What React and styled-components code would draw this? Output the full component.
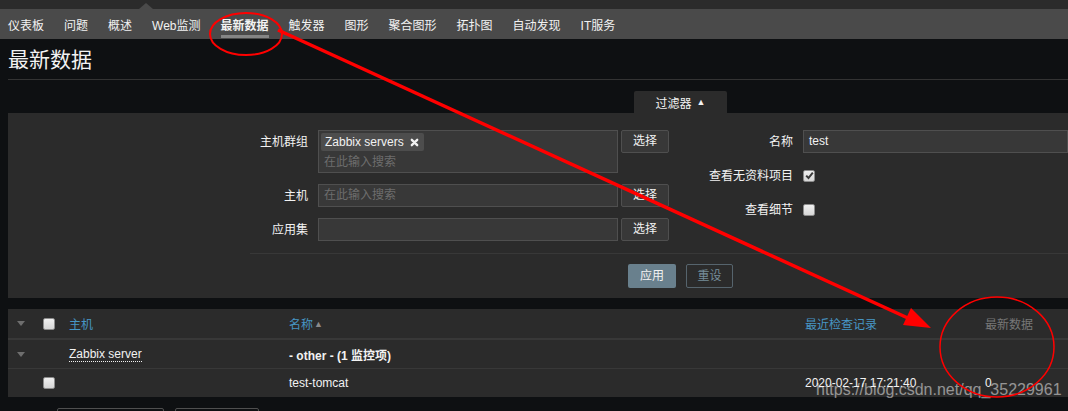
import React from 'react'
import styled, { createGlobalStyle } from 'styled-components'

const GlobalStyle = createGlobalStyle`
html, body {
  margin: 0;
  padding: 0;
  background: #0e1012;
  overflow: hidden;
}
body {
  font-family: "Liberation Sans", Arial, "Noto Sans CJK SC", sans-serif;
  font-size: 12px;
  color: #f2f2f2;
}
`;

const navItems = ['仪表板', '问题', '概述', 'Web监测', '最新数据', '触发器', '图形', '聚合图形', '拓扑图', '自动发现', 'IT服务'];

const App = () => {
  return (
    <Page>
      <GlobalStyle />
      <TopStrip />
      <SubNav>
        {navItems.map(item => (
          <NavItem key={item} active={item === '最新数据'}>{item}</NavItem>
        ))}
      </SubNav>

      <TitleBar>
        <Title>最新数据</Title>
      </TitleBar>

      <FilterTab>过滤器 <TabArrow>▲</TabArrow></FilterTab>
      <FilterBox>
        <FilterForms>
          <LeftGrid>
            <Label>主机群组</Label>
            <MultiSelect>
              <Chip>
                Zabbix servers
                <ChipClose viewBox="0 0 10 10">
                  <path d="M2 2 L8 8 M8 2 L2 8" />
                </ChipClose>
              </Chip>
              <Placeholder>在此输入搜索</Placeholder>
            </MultiSelect>
            <SelectButton>选择</SelectButton>

            <Label>主机</Label>
            <TextInput><Placeholder>在此输入搜索</Placeholder></TextInput>
            <SelectButton>选择</SelectButton>

            <Label>应用集</Label>
            <TextInput />
            <SelectButton>选择</SelectButton>
          </LeftGrid>

          <RightGrid>
            <Label>名称</Label>
            <TextInput>test</TextInput>

            <Label>查看无资料项目</Label>
            <CheckCell><Checkbox checked /></CheckCell>

            <Label>查看细节</Label>
            <CheckCell><Checkbox /></CheckCell>
          </RightGrid>
        </FilterForms>

        <FilterFooter>
          <ApplyButton>应用</ApplyButton>
          <ResetButton>重设</ResetButton>
        </FilterFooter>
      </FilterBox>

      <Table>
        <HeaderRow>
          <Cell><Collapse /></Cell>
          <Cell><Checkbox /></Cell>
          <HeadLink>主机</HeadLink>
          <HeadLink>名称<SortArrow>▲</SortArrow></HeadLink>
          <HeadLink>最近检查记录</HeadLink>
          <HeadText>最新数据</HeadText>
        </HeaderRow>
        <Row>
          <Cell><Collapse /></Cell>
          <Cell />
          <Cell><HostName>Zabbix server</HostName></Cell>
          <Cell><Bold>- other - (1 监控项)</Bold></Cell>
          <Cell />
          <Cell />
        </Row>
        <Row last>
          <Cell />
          <Cell><Checkbox /></Cell>
          <Cell />
          <Cell>test-tomcat</Cell>
          <Cell>2020-02-17 17:21:40</Cell>
          <Cell>0</Cell>
        </Row>
      </Table>

      <BottomBar>
        <OutlineBox width={107} />
        <OutlineBox width={84} />
      </BottomBar>

      <Watermark>https://blog.csdn.net/qq_35229961</Watermark>

      <Annotations viewBox="0 0 1068 411">
        <ellipse cx="246" cy="34" rx="36" ry="21" />
        <line x1="278" y1="30" x2="910" y2="319" strokeWidth="3.5" />
        <polygon points="931,328 903,325 911,308" />
        <ellipse cx="997" cy="347" rx="57" ry="50" strokeWidth="1.5" />
      </Annotations>
    </Page>
  )
};

export default App

const Page = styled.div`
position: relative;
width: 1068px;
height: 411px;
overflow: hidden;
`;

const TopStrip = styled.div`
height: 9px;
background: #2b2b2b;
`;

const SubNav = styled.nav`
position: relative;
display: flex;
gap: 20px;
height: 30px;
padding-left: 8px;
background: #4a4a4a;
&::before {
  content: '';
  position: absolute;
  left: 139px;
  top: -6px;
  border-left: 7px solid transparent;
  border-right: 7px solid transparent;
  border-bottom: 6px solid #4a4a4a;
}
`;

const NavItem = styled.div`
position: relative;
display: flex;
align-items: center;
color: #f2f2f2;
font-weight: ${p => p.active ? 'bold' : 'normal'};
&::after {
  content: '';
  display: ${p => p.active ? 'block' : 'none'};
  position: absolute;
  left: 0;
  right: 0;
  bottom: 1px;
  height: 3px;
  background: #858585;
}
`;

const TitleBar = styled.div`
display: flex;
align-items: center;
height: 41px;
margin: 0 0 0 8px;
padding-bottom: 2px;
box-sizing: border-box;
border-bottom: 1px solid #333;
`;

const Title = styled.h1`
margin: 0;
font-size: 21px;
font-weight: normal;
color: #f2f2f2;
`;

const FilterTab = styled.div`
display: flex;
align-items: center;
justify-content: center;
gap: 5px;
width: 93px;
height: 22px;
margin: 11px 0 0 634px;
background: #2b2b2b;
border-radius: 2px 2px 0 0;
color: #f2f2f2;
`;

const TabArrow = styled.span`
font-size: 9px;
`;

const FilterBox = styled.div`
margin-left: 8px;
padding-top: 17px;
background: #2b2b2b;
`;

const FilterForms = styled.div`
display: flex;
`;

const LeftGrid = styled.div`
display: grid;
grid-template-columns: 310px 303px 48px;
row-gap: 11px;
align-items: start;
`;

const RightGrid = styled.div`
flex: 1;
display: grid;
grid-template-columns: 134px 1fr;
grid-template-rows: 23px 23px 23px;
row-gap: 11px;
`;

const Label = styled.div`
height: 23px;
box-sizing: border-box;
padding: 1px 10px 0 0;
text-align: right;
line-height: 22px;
color: #f2f2f2;
`;

const MultiSelect = styled.div`
width: 300px;
height: 43px;
box-sizing: border-box;
padding: 2px 2px 0 2px;
background: #383838;
border: 1px solid #4f4f4f;
`;

const Chip = styled.div`
display: inline-flex;
align-items: center;
gap: 6px;
height: 18px;
padding: 0 5px 0 4px;
background: #4d4d4d;
border-radius: 2px;
color: #f2f2f2;
`;

const ChipClose = styled.svg`
width: 9px;
height: 9px;
stroke: #f2f2f2;
stroke-width: 2.6;
stroke-linecap: round;
`;

const Placeholder = styled.div`
padding-left: 3px;
margin-top: 2px;
color: #6d6d6d;
line-height: 18px;
`;

const TextInput = styled.div`
width: 300px;
height: 23px;
box-sizing: border-box;
padding-left: 5px;
background: #383838;
border: 1px solid #4f4f4f;
line-height: 21px;
color: #f2f2f2;
${RightGrid} & {
  width: auto;
}
& > ${Placeholder} {
  padding: 0;
  margin: 0;
  line-height: 21px;
}
`;

const SelectButton = styled.div`
height: 23px;
box-sizing: border-box;
border: 1px solid #4f4f4f;
border-radius: 2px;
background: #383838;
line-height: 21px;
text-align: center;
color: #f2f2f2;
`;

const CheckCell = styled.div`
display: flex;
align-items: center;
`;

const CheckboxBox = styled.div`
width: 12px;
height: 12px;
box-sizing: border-box;
border: 1px solid #8c8c8c;
border-radius: 2px;
background: linear-gradient(#f0f0f0, #d6d6d6);
display: flex;
align-items: center;
justify-content: center;
`;

const Checkbox = ({checked}) => (
  <CheckboxBox>
    {checked && (
      <svg width="9" height="9" viewBox="0 0 9 9">
        <path d="M1.2 4.6 L3.5 7 L7.8 1.6" fill="none" stroke="#3a3a3a" strokeWidth="2" />
      </svg>
    )}
  </CheckboxBox>
);

const FilterFooter = styled.div`
display: flex;
gap: 10px;
margin: 12px 0 0 242px;
padding: 10px 0 10px 378px;
border-top: 1px solid #383838;
`;

const ApplyButton = styled.div`
width: 48px;
height: 24px;
box-sizing: border-box;
border-radius: 2px;
background: #69808d;
color: #f2f2f2;
line-height: 24px;
text-align: center;
`;

const ResetButton = styled.div`
width: 47px;
height: 24px;
box-sizing: border-box;
border: 1px solid #56646d;
border-radius: 2px;
color: #768d99;
line-height: 22px;
text-align: center;
`;

const Table = styled.div`
margin: 11px 0 0 8px;
background: #2b2b2b;
`;

const HeaderRow = styled.div`
display: grid;
grid-template-columns: 35px 26px 220px 516px 180px 1fr;
align-items: center;
height: 29px;
border-bottom: 2px solid #383838;
`;

const Row = styled.div`
display: grid;
grid-template-columns: 35px 26px 220px 516px 180px 1fr;
align-items: center;
height: 28px;
border-bottom: ${p => p.last ? 'none' : '1px solid #383838'};
`;

const Cell = styled.div`
display: flex;
align-items: center;
color: #f2f2f2;
`;

const Collapse = styled.span`
margin-left: 9px;
border-left: 4px solid transparent;
border-right: 4px solid transparent;
border-top: 5px solid #6e6e6e;
`;

const HeadLink = styled.div`
display: flex;
align-items: center;
color: #4796c4;
`;

const HeadText = styled.div`
color: #777;
`;

const SortArrow = styled.span`
margin-left: 1px;
font-size: 9px;
color: #8a8a8a;
`;

const HostName = styled.span`
line-height: 14px;
border-bottom: 1px dotted #f2f2f2;
`;

const Bold = styled.span`
font-weight: bold;
`;

const BottomBar = styled.div`
display: flex;
gap: 11px;
margin: 11px 0 0 57px;
`;

const OutlineBox = styled.div`
width: ${p => p.width}px;
height: 24px;
box-sizing: border-box;
border: 1px solid #4f4f4f;
border-radius: 2px;
`;

const Watermark = styled.div`
position: absolute;
left: 816px;
top: 381px;
font-family: "Liberation Sans", Arial, sans-serif;
font-size: 16px;
color: rgba(255, 255, 255, 0.5);
pointer-events: none;
`;

const Annotations = styled.svg`
position: absolute;
left: 0;
top: 0;
width: 1068px;
height: 411px;
pointer-events: none;
fill: none;
stroke: #f00;
stroke-width: 2;
& polygon {
  fill: #f00;
  stroke: none;
}
`;
